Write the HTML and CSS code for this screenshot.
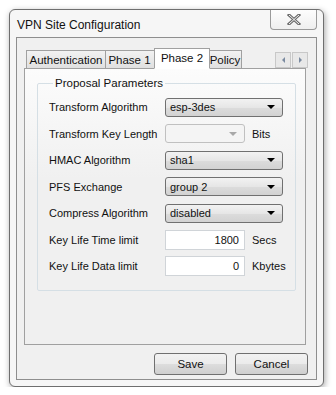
FILE: index.html
```html
<!DOCTYPE html>
<html lang="en">
<head>
  <meta charset="UTF-8">
  <title>VPN Site Configuration</title>
  <meta name="viewport" content="width=device-width, initial-scale=1">
  <link rel="stylesheet" href="styles.css">
</head>
<body>
  <div class="window">
    <div class="titlebar">
      <span class="title">VPN Site Configuration</span>
      <span class="close">
        <svg width="14" height="11" viewBox="0 0 14 11">
          <path d="M2 1 L12 10 M12 1 L2 10" stroke="#6b6b6b" stroke-width="3" stroke-linecap="square"/>
          <path d="M2 1 L12 10 M12 1 L2 10" stroke="#f4f4f4" stroke-width="1"/>
        </svg>
      </span>
    </div>

    <div class="client">
      <div class="tabs">
        <span class="tab t-auth">Authentication</span>
        <span class="tab t-p1">Phase 1</span>
        <span class="tab active">Phase 2</span>
        <span class="tab t-pol">Policy</span>
        <span class="spin">
          <span class="spin-btn"><i class="arr left"></i></span>
          <span class="spin-btn"><i class="arr right"></i></span>
        </span>
      </div>

      <div class="panel">
        <fieldset class="group">
          <legend>Proposal Parameters</legend>

          <div class="row">
            <label>Transform Algorithm</label>
            <div class="combo wide"><span>esp-3des</span><i class="drop"></i></div>
          </div>
          <div class="row">
            <label>Transform Key Length</label>
            <div class="combo narrow disabled"><span></span><i class="drop"></i></div>
            <span class="unit">Bits</span>
          </div>
          <div class="row">
            <label>HMAC Algorithm</label>
            <div class="combo wide"><span>sha1</span><i class="drop"></i></div>
          </div>
          <div class="row">
            <label>PFS Exchange</label>
            <div class="combo wide"><span>group 2</span><i class="drop"></i></div>
          </div>
          <div class="row">
            <label>Compress Algorithm</label>
            <div class="combo wide"><span>disabled</span><i class="drop"></i></div>
          </div>
          <div class="row">
            <label>Key Life Time limit</label>
            <div class="edit">1800</div>
            <span class="unit">Secs</span>
          </div>
          <div class="row">
            <label>Key Life Data limit</label>
            <div class="edit">0</div>
            <span class="unit">Kbytes</span>
          </div>
        </fieldset>
      </div>

      <div class="buttons">
        <button class="btn">Save</button>
        <button class="btn">Cancel</button>
      </div>
    </div>
  </div>
</body>
</html>
```

FILE: styles.css
```css
body {
  margin: 0;
  background: #fff;
  font-family: "Liberation Sans", Arial, sans-serif;
  font-size: 11px;
  color: #111;
}
.window {
  margin: 9px 0 0 9px;
  width: 313px;
  height: 376px;
  border: 1px solid #6f6f6f;
  border-radius: 6px;
  background: #f6f6f6;
  box-shadow: 1px 2px 6px rgba(0, 0, 0, 0.35);
  display: flex;
  flex-direction: column;
}
.titlebar {
  height: 27px;
  display: flex;
  align-items: flex-start;
  justify-content: space-between;
}
.title {
  font-size: 12px;
  margin: 8px 0 0 7px;
}
.close {
  width: 45px;
  height: 19px;
  margin-right: 6px;
  border: 1px solid #9a9a9a;
  border-top: none;
  border-radius: 0 0 4px 4px;
  background: linear-gradient(#fdfdfd, #efefef);
  display: flex;
  align-items: center;
  justify-content: center;
}
.client {
  flex: 1;
  margin: 0 6px 6px 6px;
  border: 1px solid #8e8e8e;
  background: #f0f0f0;
  padding: 10px 10px 0 7px;
  display: flex;
  flex-direction: column;
}
.tabs {
  height: 20px;
  display: flex;
  align-items: flex-end;
  padding-left: 2px;
  position: relative;
  z-index: 1;
  white-space: nowrap;
}
.tab {
  height: 18px;
  line-height: 19px;
  box-sizing: border-box;
  text-align: center;
  border: 1px solid #a0a0a0;
  border-bottom: none;
  background: linear-gradient(#f2f2f2, #e0e0e0);
  margin-right: -1px;
  font-size: 11.5px;
}
.t-auth { width: 80px; }
.t-p1 { width: 52px; padding-right: 3px; }
.t-pol { width: 34px; }
.tab.active {
  width: 56px;
  height: 21px;
  line-height: 18px;
  background: #fff;
  margin: 0 -2px -1px -2px;
  position: relative;
  z-index: 2;
  border-bottom: 1px solid #fff;
}
.spin {
  margin-left: auto;
  margin-right: -2px;
  align-self: center;
  display: flex;
  gap: 1px;
  margin-top: 4px;
}
.spin-btn {
  width: 14px;
  height: 14px;
  border: 1px solid #c8c8c8;
  background: #e8e8e8;
  display: flex;
  align-items: center;
  justify-content: center;
}
.arr {
  width: 0;
  height: 0;
  border-top: 3px solid transparent;
  border-bottom: 3px solid transparent;
}
.arr.left { border-right: 3px solid #7a8aa0; }
.arr.right { border-left: 3px solid #7a8aa0; }
.panel {
  height: 277px;
  box-sizing: border-box;
  border: 1px solid #a0a0a0;
  background: linear-gradient(#fcfcfc, #f0f0f0 40%);
  padding: 8px 9px 0 12px;
}
.group {
  margin: 0;
  padding: 5px 0 10px 11px;
  border: 1px solid #d5dfe5;
  border-radius: 2px;
}
.group legend {
  font-size: 11.5px;
  padding: 0 2px;
  margin-left: 4px;
}
.row {
  height: 26.5px;
  display: flex;
  align-items: center;
  white-space: nowrap;
}
.row label {
  width: 116px;
}
.combo {
  height: 19px;
  box-sizing: border-box;
  border: 1px solid #707070;
  border-radius: 3px;
  background: linear-gradient(#f2f2f2, #e6e6e6 50%, #dcdcdc 51%, #d2d2d2);
  display: flex;
  align-items: center;
  justify-content: space-between;
  padding: 0 7px 0 4px;
}
.combo.wide { width: 118px; }
.combo.narrow { width: 80px; }
.combo.disabled {
  border-color: #c0c0c0;
  background: #f4f4f4;
}
.drop {
  width: 0;
  height: 0;
  border-left: 4px solid transparent;
  border-right: 4px solid transparent;
  border-top: 4px solid #000;
}
.disabled .drop { border-top-color: #a8a8a8; }
.edit {
  width: 80px;
  height: 20px;
  box-sizing: border-box;
  border: 1px solid #d0d4d8;
  background: #fff;
  text-align: right;
  padding-right: 5px;
  line-height: 18px;
}
.unit {
  margin-left: 7px;
}
.buttons {
  display: flex;
  justify-content: flex-end;
  gap: 8px;
  margin-top: 8px;
  margin-right: -2px;
}
.btn {
  width: 73px;
  height: 22px;
  border: 1px solid #707070;
  border-radius: 3px;
  background: linear-gradient(#f2f2f2, #ebebeb 50%, #dddddd 51%, #cfcfcf);
  font-family: "Liberation Sans", Arial, sans-serif;
  font-size: 11.5px;
  color: #111;
  padding: 0;
}
```
